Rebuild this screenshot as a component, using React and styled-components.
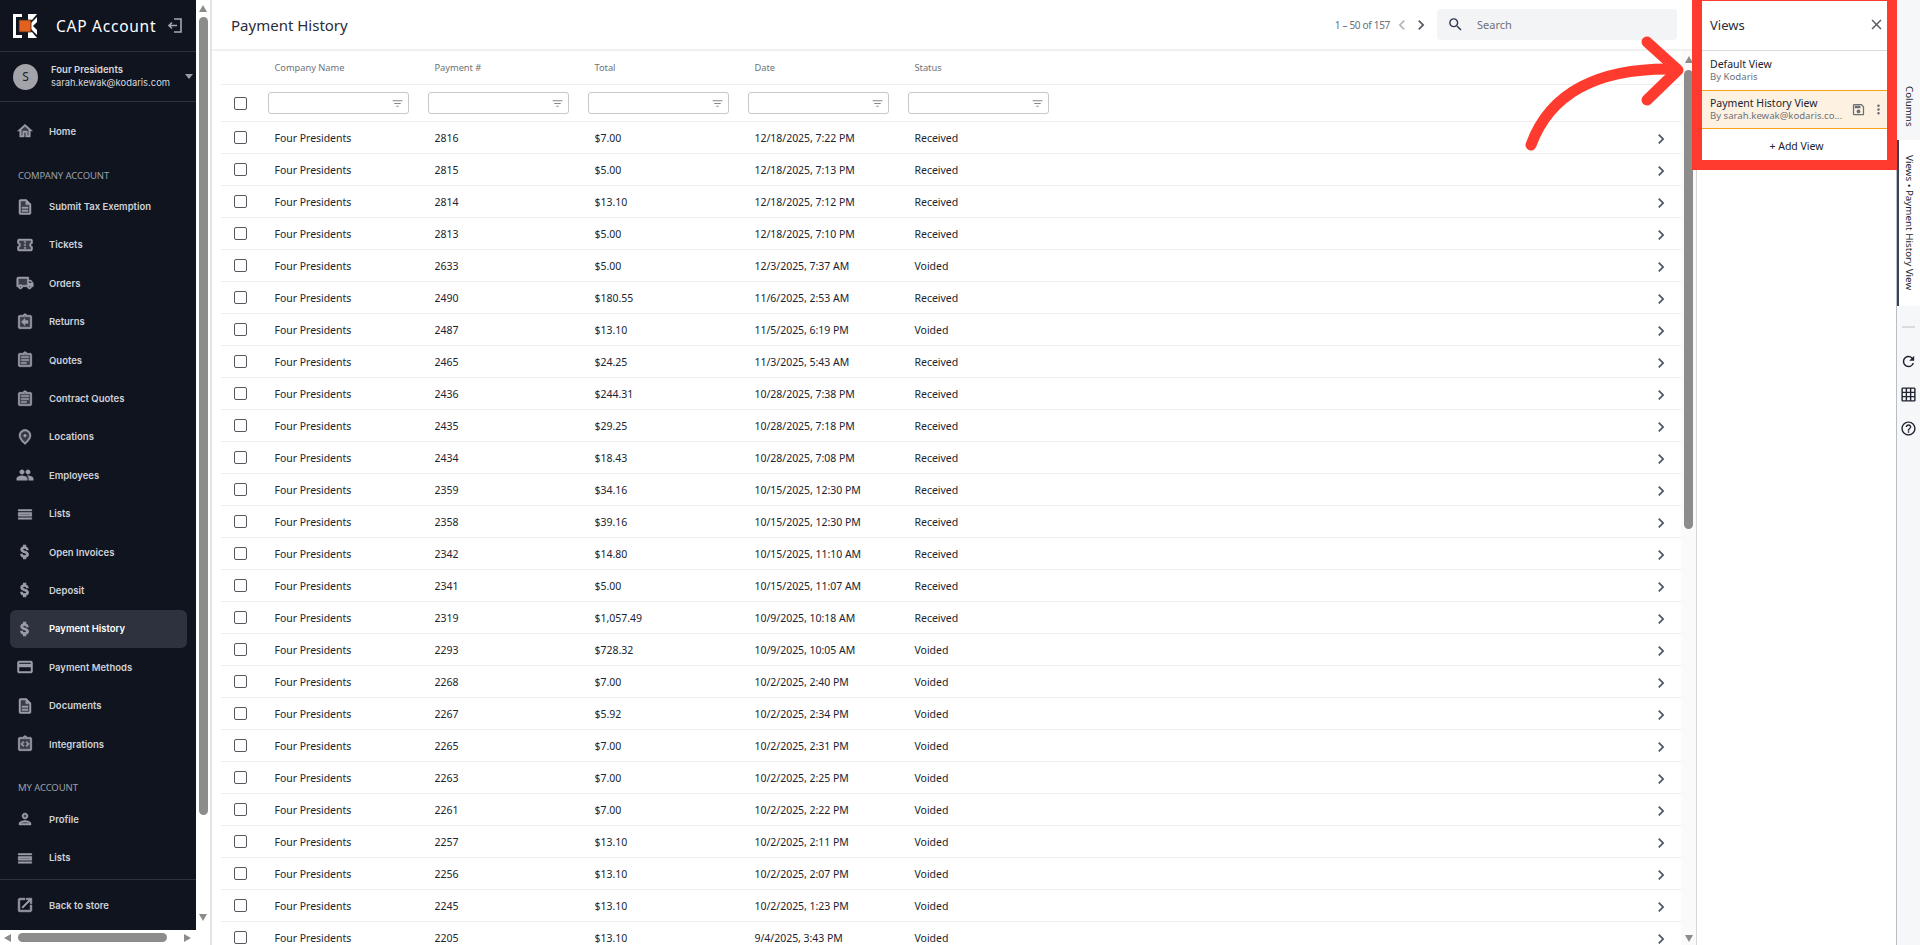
import React from 'react';
import styled, { createGlobalStyle } from 'styled-components';
import {
  MdOutlineHome, MdHome, MdOutlineDescription, MdDescription, MdOutlineConfirmationNumber, MdConfirmationNumber,
  MdOutlineLocalShipping, MdLocalShipping, MdOutlineAssignmentReturn, MdAssignmentReturn,
  MdOutlineAssignment, MdAssignment, MdOutlinePlace, MdPlace, MdPeople, MdOutlineCalendarViewDay, MdCalendarViewDay,
  MdAttachMoney, MdOutlineCreditCard, MdCreditCard,
  MdOutlineIntegrationInstructions, MdIntegrationInstructions, MdOutlinePerson, MdPerson, MdOutlineOpenInNew,
  MdOutlineSave, MdMoreVert, MdRefresh,
  MdOutlineGridOn, MdHelpOutline, MdClose, MdSearch, MdChevronRight, MdChevronLeft, MdFilterList,
} from 'react-icons/md';

const Global = createGlobalStyle`
  html, body { margin: 0; padding: 0; height: 100%; overflow: hidden; background: #fff; }
  * { box-sizing: border-box; }
  body { font-family: "Noto Sans", "Open Sans", sans-serif; color: #1f2430; }
`;

const Page = styled.div`
  position: relative;
  display: flex;
  width: 1920px;
  height: 945px;
  overflow: hidden;
`;

/* Sidebar */
const SideColumn = styled.aside`
  width: 212px;
  flex: none;
  display: flex;
  flex-direction: column;
  border-right: 2px solid #e4e4e6;
`;
const SideTop = styled.div`
  flex: 1;
  min-height: 0;
  display: flex;
`;
const Nav = styled.nav`
  width: 196px;
  flex: none;
  background: #10141f;
  display: flex;
  flex-direction: column;
  font-family: Inter, "Noto Sans", sans-serif;
`;
const Brand = styled.div`
  height: 52px;
  flex: none;
  display: flex;
  align-items: center;
  padding: 0 0 0 13px;
  border-bottom: 1px solid #2d313b;
`;
const BrandName = styled.span`
  margin-left: 19px;
  font-family: "Noto Sans", sans-serif;
  font-size: 15.5px;
  letter-spacing: 0.75px;
  color: #fff;
  white-space: nowrap;
`;
const LogoutIcon = styled.svg`
  margin-left: 11px;
  flex: none;
`;
const UserBox = styled.div`
  height: 50px;
  flex: none;
  display: flex;
  align-items: center;
  padding: 0 0 0 13px;
  border-bottom: 1px solid #2d313b;
`;
const Avatar = styled.div`
  width: 25px;
  height: 26px;
  border-radius: 50%;
  background: #a2a4aa;
  color: #1b2030;
  font-family: "Noto Sans", sans-serif;
  font-size: 12px;
  display: flex;
  align-items: center;
  justify-content: center;
  flex: none;
`;
const UserText = styled.div`
  margin-left: 13px;
  width: 122px;
  display: flex;
  flex-direction: column;
  gap: 1px;
`;
const UserName = styled.span`
  font-size: 9.5px;
  line-height: 12px;
  font-weight: 600;
  color: #d6d8dc;
  white-space: nowrap;
`;
const UserMail = styled.span`
  font-size: 9.4px;
  line-height: 12px;
  color: #d6d8dc;
  white-space: nowrap;
`;
const Caret = styled.span`
  margin-left: 12px;
  flex: none;
  width: 0;
  height: 0;
  border-left: 4.5px solid transparent;
  border-right: 4.5px solid transparent;
  border-top: 5px solid #9a9da4;
`;
const NavList = styled.div`
  flex: 1;
  display: flex;
  flex-direction: column;
  padding-top: 10px;
`;
const NavItem = styled.div`
  height: 38.4px;
  flex: none;
  margin: 0 9px 0 10px;
  padding-left: 6px;
  display: flex;
  align-items: center;
  border-radius: 6px;
  background: ${p => (p.$active ? '#2d323e' : 'transparent')};
  color: ${p => (p.$active ? '#fff' : '#cfd2d8')};
  font-size: 9.5px;
  font-weight: 600;
  white-space: nowrap;
`;
const Glyph = styled.span`
  width: 18px;
  height: 18px;
  flex: none;
  display: grid;
  color: #9a9da6;
  svg { width: 18px; height: 18px; }
`;
const GlyphFill = styled.span`
  grid-area: 1 / 1;
  display: flex;
  opacity: 0.3;
`;
const GlyphBold = styled.span`
  grid-area: 1 / 1;
  display: flex;
  svg path:not([fill="none"]) { stroke: currentColor; stroke-width: ${p => p.$w || 0.6}px; }
`;
const NavLabel = styled.span`
  margin-left: 15px;
`;
const NavHeading = styled.div`
  height: ${p => p.$h}px;
  flex: none;
  padding: ${p => p.$top}px 0 0 18px;
  font-family: "Noto Sans", sans-serif;
  font-size: 9.5px;
  line-height: 12px;
  letter-spacing: -0.1px;
  color: #9da0a8;
`;
const NavFooter = styled.div`
  height: 51px;
  flex: none;
  padding-top: 6px;
  border-top: 1px solid #2d313b;
`;
const VBar = styled.div`
  flex: none;
  width: ${p => p.$w}px;
  display: flex;
  flex-direction: column;
  align-items: center;
  background: ${p => p.$bg || '#fff'};
  padding-top: ${p => p.$top}px;
`;
const UpArrow = styled.span`
  flex: none;
  width: 0;
  height: 0;
  border-left: 4.5px solid transparent;
  border-right: 4.5px solid transparent;
  border-bottom: 7px solid #8c8c8c;
`;
const DownArrow = styled.span`
  flex: none;
  width: 0;
  height: 0;
  border-left: 4.5px solid transparent;
  border-right: 4.5px solid transparent;
  border-top: 7px solid #8c8c8c;
`;
const VThumb = styled.div`
  flex: none;
  width: 9px;
  height: ${p => p.$h}px;
  margin-top: ${p => p.$gap}px;
  margin-bottom: ${p => p.$after}px;
  border-radius: 5px;
  background: #8c8c8c;
`;
const HBar = styled.div`
  height: 15px;
  flex: none;
  width: 196px;
  display: flex;
  align-items: center;
  padding-left: 4px;
`;
const LeftArrow = styled.span`
  width: 0;
  height: 0;
  border-top: 4.5px solid transparent;
  border-bottom: 4.5px solid transparent;
  border-right: 7px solid #8c8c8c;
`;
const RightArrow = styled.span`
  margin-left: 17px;
  width: 0;
  height: 0;
  border-top: 4.5px solid transparent;
  border-bottom: 4.5px solid transparent;
  border-left: 7px solid #8c8c8c;
`;
const HThumb = styled.div`
  margin-left: 7px;
  width: 149px;
  height: 9px;
  border-radius: 5px;
  background: #8c8c8c;
`;

/* Main */
const Main = styled.main`
  width: 1484px;
  flex: none;
  display: flex;
  flex-direction: column;
`;
const Header = styled.header`
  height: 51px;
  flex: none;
  display: flex;
  align-items: center;
  padding: 0 19px 0 19px;
  border-bottom: 2px solid #f0f0f1;
`;
const Title = styled.h1`
  margin: 0;
  flex: 1;
  font-size: 15px;
  font-weight: 400;
  color: #2a2e3a;
`;
const PageInfo = styled.span`
  font-size: 10px;
  letter-spacing: -0.3px;
  color: #6b6f78;
  margin-right: 2px;
`;
const PageBtn = styled.span`
  display: flex;
  color: ${p => (p.$off ? '#b4b6ba' : '#555962')};
  margin-right: ${p => p.$mr}px;
  svg { width: 20px; height: 20px; display: block; }
`;
const Search = styled.div`
  width: 240px;
  height: 31px;
  margin-bottom: 1px;
  border-radius: 4px;
  background: #f3f4f6;
  display: flex;
  align-items: center;
  padding-left: 10px;
  font-size: 11px;
  color: #6d717a;
  svg { width: 17px; height: 17px; color: #2f3a52; margin-right: 13px; }
`;
const TableArea = styled.div`
  flex: 1;
  min-height: 0;
  display: flex;
`;
const TableWrap = styled.div`
  width: 1460px;
  margin-left: 9px;
  flex: none;
  overflow: hidden;
`;
const Row = styled.div`
  display: grid;
  grid-template-columns: 47px 160px 160px 160px 160px 1fr 46px;
  align-items: center;
  height: ${p => p.$h || 32}px;
  border-bottom: 1px solid #eeeeef;
  font-size: 10.5px;
  letter-spacing: -0.03px;
  color: #20242e;
`;
const HeadCell = styled.div`
  padding-left: 6.5px;
  font-size: 9.3px;
  color: #6f7278;
`;
const Cell = styled.div`
  padding-left: 6.5px;
  white-space: nowrap;
`;
const CheckCell = styled.div`
  padding-left: 13px;
  display: flex;
`;
const Box = styled.span`
  width: 13px;
  height: 13px;
  border: 1px solid #55585f;
  border-radius: 2px;
  background: #fff;
`;
const FilterInput = styled.div`
  width: 141px;
  height: 22px;
  border: 1px solid #c8c8ca;
  border-radius: 3px;
  display: flex;
  align-items: center;
  justify-content: flex-end;
  padding-right: 4px;
  svg { width: 13px; height: 13px; color: #85878c; }
`;
const Chevron = styled.div`
  grid-column: 7;
  display: flex;
  padding: 2px 0 0 16px;
  color: #4c5566;
  svg { width: 20px; height: 20px; }
`;

/* Views panel */
const Panel = styled.section`
  width: 201px;
  flex: none;
  display: flex;
  flex-direction: column;
  border-left: 1px solid #d6d6da;
  border-right: 1px solid #b9bdc6;
  background: #fff;
`;
const PanelHead = styled.div`
  height: 51px;
  flex: none;
  display: flex;
  align-items: center;
  justify-content: space-between;
  padding: 0 11px 0 13px;
  border-bottom: 1px solid #d9d9e0;
  font-size: 13px;
  color: #2a2e3a;
  svg { width: 17px; height: 17px; color: #555962; margin-top: -2px; }
`;
const ViewItem = styled.div`
  height: ${p => p.$h}px;
  flex: none;
  display: flex;
  align-items: center;
  padding: 0 10px 0 13px;
  background: ${p => (p.$active ? '#fdf1e1' : '#fff')};
  border-top: ${p => (p.$active ? '1px solid #f5a31a' : 'none')};
  border-bottom: ${p => (p.$active ? '1px solid #f5a31a' : 'none')};
`;
const ViewText = styled.div`
  flex: 1;
  min-width: 0;
  display: flex;
  flex-direction: column;
`;
const ViewName = styled.span`
  font-size: 10.5px;
  line-height: 13px;
  color: #20242e;
`;
const ViewOwner = styled.span`
  font-size: 9.6px;
  line-height: 12px;
  color: #6d717a;
  white-space: nowrap;
`;
const ViewIcon = styled.span`
  display: flex;
  color: #6b6f78;
  margin-left: ${p => p.$ml}px;
  svg { width: ${p => p.$s}px; height: ${p => p.$s}px; }
`;
const AddView = styled.div`
  height: 33px;
  flex: none;
  display: flex;
  align-items: center;
  justify-content: center;
  font-size: 10.5px;
  color: #20242e;
`;

/* Right strip */
const Strip = styled.div`
  flex: 1;
  background: #f6f7f9;
  display: flex;
  flex-direction: column;
  align-items: center;
`;
const StripTab = styled.div`
  writing-mode: vertical-rl;
  width: 100%;
  height: ${p => p.$h}px;
  flex: none;
  display: flex;
  align-items: center;
  padding-top: ${p => p.$top}px;
  font-size: 9.8px;
  white-space: nowrap;
  color: #20242e;
  border-left: ${p => (p.$active ? '2px solid #3a4257' : '2px solid transparent')};
  background: ${p => (p.$active ? '#fff' : 'transparent')};
`;
const StripRule = styled.div`
  width: 13px;
  height: 2px;
  margin-top: 20px;
  background: #dadbde;
  flex: none;
`;
const StripIcon = styled.div`
  display: flex;
  margin-top: ${p => p.$mt}px;
  color: #1f2430;
  svg { width: 17px; height: 17px; }
`;

/* Annotation */
const RedFrame = styled.div`
  position: absolute;
  left: 1692px;
  top: -9px;
  width: 205px;
  height: 179px;
  border: 10px solid #ff3a2e;
  pointer-events: none;
`;
const ArrowOverlay = styled.svg`
  position: absolute;
  left: 1500px;
  top: 20px;
  pointer-events: none;
`;

const company = [
  ['Submit Tax Exemption', MdOutlineDescription, MdDescription], ['Tickets', MdOutlineConfirmationNumber, MdConfirmationNumber],
  ['Orders', MdOutlineLocalShipping, MdLocalShipping], ['Returns', MdOutlineAssignmentReturn, MdAssignmentReturn],
  ['Quotes', MdOutlineAssignment, MdAssignment], ['Contract Quotes', MdOutlineAssignment, MdAssignment],
  ['Locations', MdOutlinePlace, MdPlace], ['Employees', MdPeople], ['Lists', MdOutlineCalendarViewDay, MdCalendarViewDay],
  ['Open Invoices', MdAttachMoney, null, 1.4], ['Deposit', MdAttachMoney, null, 1.4], ['Payment History', MdAttachMoney, null, 1.4, true],
  ['Payment Methods', MdOutlineCreditCard, MdCreditCard], ['Documents', MdOutlineDescription, MdDescription],
  ['Integrations', MdOutlineIntegrationInstructions, MdIntegrationInstructions],
];

const rows = [
  ['2816', '$7.00', '12/18/2025, 7:22 PM', 'Received'], ['2815', '$5.00', '12/18/2025, 7:13 PM', 'Received'],
  ['2814', '$13.10', '12/18/2025, 7:12 PM', 'Received'], ['2813', '$5.00', '12/18/2025, 7:10 PM', 'Received'],
  ['2633', '$5.00', '12/3/2025, 7:37 AM', 'Voided'], ['2490', '$180.55', '11/6/2025, 2:53 AM', 'Received'],
  ['2487', '$13.10', '11/5/2025, 6:19 PM', 'Voided'], ['2465', '$24.25', '11/3/2025, 5:43 AM', 'Received'],
  ['2436', '$244.31', '10/28/2025, 7:38 PM', 'Received'], ['2435', '$29.25', '10/28/2025, 7:18 PM', 'Received'],
  ['2434', '$18.43', '10/28/2025, 7:08 PM', 'Received'], ['2359', '$34.16', '10/15/2025, 12:30 PM', 'Received'],
  ['2358', '$39.16', '10/15/2025, 12:30 PM', 'Received'], ['2342', '$14.80', '10/15/2025, 11:10 AM', 'Received'],
  ['2341', '$5.00', '10/15/2025, 11:07 AM', 'Received'], ['2319', '$1,057.49', '10/9/2025, 10:18 AM', 'Received'],
  ['2293', '$728.32', '10/9/2025, 10:05 AM', 'Voided'], ['2268', '$7.00', '10/2/2025, 2:40 PM', 'Voided'],
  ['2267', '$5.92', '10/2/2025, 2:34 PM', 'Voided'], ['2265', '$7.00', '10/2/2025, 2:31 PM', 'Voided'],
  ['2263', '$7.00', '10/2/2025, 2:25 PM', 'Voided'], ['2261', '$7.00', '10/2/2025, 2:22 PM', 'Voided'],
  ['2257', '$13.10', '10/2/2025, 2:11 PM', 'Voided'], ['2256', '$13.10', '10/2/2025, 2:07 PM', 'Voided'],
  ['2245', '$13.10', '10/2/2025, 1:23 PM', 'Voided'], ['2205', '$13.10', '9/4/2025, 3:43 PM', 'Voided'],
];

const NavEntry = ({ label, Icon, Fill, bold, active }) => (
  <NavItem $active={active}>
    <Glyph>
      {Fill && <GlyphFill><Fill /></GlyphFill>}
      <GlyphBold $w={bold}><Icon /></GlyphBold>
    </Glyph>
    <NavLabel>{label}</NavLabel>
  </NavItem>
);

const Filter = () => (
  <div>
    <FilterInput><MdFilterList /></FilterInput>
  </div>
);

export default function App() {
  return (
    <Page>
      <Global />
      <SideColumn>
        <SideTop>
          <Nav>
            <Brand>
              <svg width="24" height="24" viewBox="0 0 24 24">
                <path d="M0 0h9v3H3v18h6v3H0z M15 0h9l-5 6h-4z M15 24h9l-5-6h-4z M18 9l6-6v5l-4 4 4 4v5l-6-6z" fill="#fff" />
                <rect x="6" y="6" width="12" height="12" fill="#e2611f" stroke="#3a2a22" strokeWidth="0.8" />
              </svg>
              <BrandName>CAP Account</BrandName>
              <LogoutIcon width="15" height="15" viewBox="0 0 15 15" fill="none" stroke="#a5a8ae" strokeWidth="1.6">
                <path d="M7 1h7v13H7" />
                <path d="M10 7.5H2M5 4.5l-3 3 3 3" />
              </LogoutIcon>
            </Brand>
            <UserBox>
              <Avatar>S</Avatar>
              <UserText>
                <UserName>Four Presidents</UserName>
                <UserMail>sarah.kewak@kodaris.com</UserMail>
              </UserText>
              <Caret />
            </UserBox>
            <NavList>
              <NavEntry label="Home" Icon={MdOutlineHome} Fill={MdHome} />
              <NavHeading $h={37} $top={20}>COMPANY ACCOUNT</NavHeading>
              {company.map(([l, Ic, Fl, b, a]) => <NavEntry key={l} label={l} Icon={Ic} Fill={Fl} bold={b} active={a} />)}
              <NavHeading $h={37} $top={19}>MY ACCOUNT</NavHeading>
              <NavEntry label="Profile" Icon={MdOutlinePerson} Fill={MdPerson} />
              <NavEntry label="Lists" Icon={MdOutlineCalendarViewDay} Fill={MdCalendarViewDay} />
            </NavList>
            <NavFooter>
              <NavEntry label="Back to store" Icon={MdOutlineOpenInNew} bold={1} />
            </NavFooter>
          </Nav>
          <VBar $w={14} $top={5}>
            <UpArrow />
            <VThumb $h={798} $gap={5} $after={99} />
            <DownArrow />
          </VBar>
        </SideTop>
        <HBar>
          <LeftArrow />
          <HThumb />
          <RightArrow />
        </HBar>
      </SideColumn>

      <Main>
        <Header>
          <Title>Payment History</Title>
          <PageInfo>1 – 50 of 157</PageInfo>
          <PageBtn $off $mr={-1}><MdChevronLeft /></PageBtn>
          <PageBtn $mr={6}><MdChevronRight /></PageBtn>
          <Search><MdSearch />Search</Search>
        </Header>
        <TableArea>
          <TableWrap>
            <Row $h={34}>
              <span />
              <HeadCell>Company Name</HeadCell>
              <HeadCell>Payment #</HeadCell>
              <HeadCell>Total</HeadCell>
              <HeadCell>Date</HeadCell>
              <HeadCell>Status</HeadCell>
            </Row>
            <Row $h={37}>
              <CheckCell><Box /></CheckCell>
              <Filter /><Filter /><Filter /><Filter /><Filter />
            </Row>
            {rows.map(r => (
              <Row key={r[0]}>
                <CheckCell><Box /></CheckCell>
                <Cell>Four Presidents</Cell>
                <Cell>{r[0]}</Cell>
                <Cell>{r[1]}</Cell>
                <Cell>{r[2]}</Cell>
                <Cell>{r[3]}</Cell>
                <Chevron><MdChevronRight /></Chevron>
              </Row>
            ))}
          </TableWrap>
          <VBar $w={15} $top={5} $bg="#fafafa">
            <UpArrow />
            <VThumb $h={459} $gap={7} $after={406} />
            <DownArrow />
          </VBar>
        </TableArea>
      </Main>

      <Panel>
        <PanelHead>Views<MdClose /></PanelHead>
        <ViewItem $h={39}>
          <ViewText>
            <ViewName>Default View</ViewName>
            <ViewOwner>By Kodaris</ViewOwner>
          </ViewText>
        </ViewItem>
        <ViewItem $active $h={39}>
          <ViewText>
            <ViewName>Payment History View</ViewName>
            <ViewOwner>By sarah.kewak@kodaris.co...</ViewOwner>
          </ViewText>
          <ViewIcon $s={15} $ml={5}><MdOutlineSave /></ViewIcon>
          <ViewIcon $s={15} $ml={5}><MdMoreVert /></ViewIcon>
        </ViewItem>
        <AddView>+ Add View</AddView>
      </Panel>

      <Strip>
        <StripTab $h={140} $top={86}>Columns</StripTab>
        <StripTab $active $h={166} $top={15}>Views • Payment History View</StripTab>
        <StripRule />
        <StripIcon $mt={25}><MdRefresh /></StripIcon>
        <StripIcon $mt={16}><MdOutlineGridOn /></StripIcon>
        <StripIcon $mt={17}><MdHelpOutline /></StripIcon>
      </Strip>

      <RedFrame />
      <ArrowOverlay width="200" height="140" viewBox="0 0 200 140" fill="none" stroke="#ff3a2e" strokeWidth="11" strokeLinecap="round" strokeLinejoin="round">
        <path d="M31 125C50 72 100 47 176 49" />
        <path d="M147 22l31 28-31 30" />
      </ArrowOverlay>
    </Page>
  );
}
